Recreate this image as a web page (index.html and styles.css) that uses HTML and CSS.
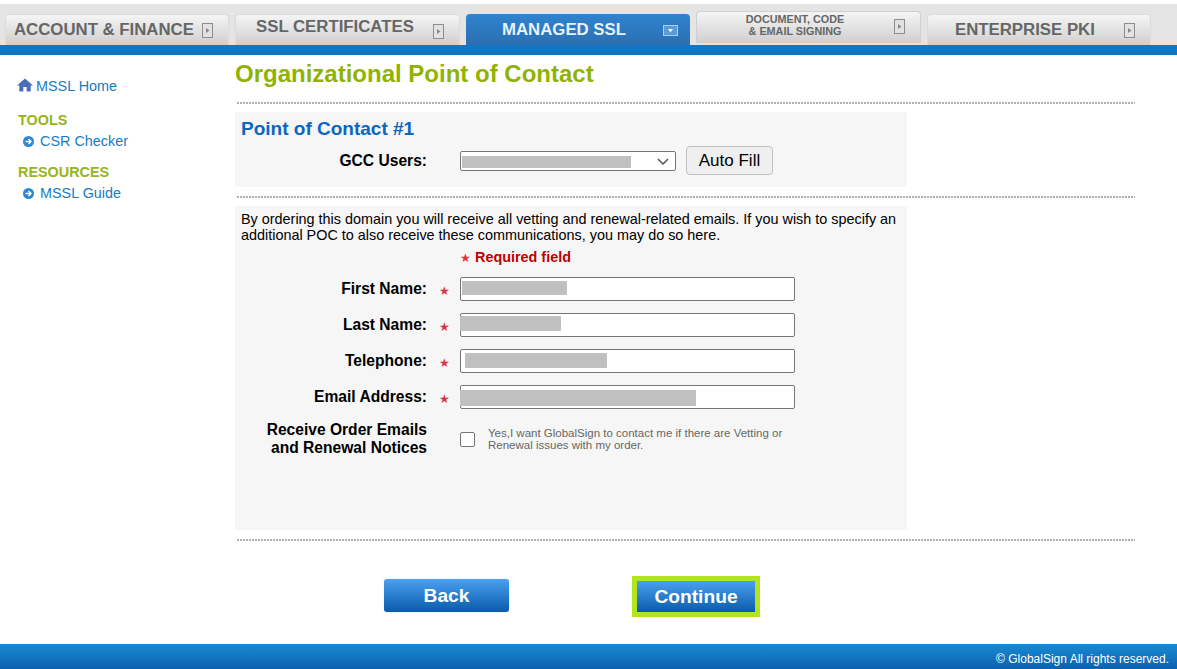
FILE: index.html
```html
<!DOCTYPE html>
<html lang="en">
<head>
<meta charset="utf-8">
<title>Organizational Point of Contact</title>
<link rel="stylesheet" href="styles.css">
</head>
<body>
<header class="top">
  <nav class="tabs">
    <a class="tab tab-account"><span class="tab-text">ACCOUNT &amp; FINANCE</span><svg class="tab-ico" viewBox="0 0 11 15"><rect x=".5" y=".5" width="10" height="14" fill="#e2e2e2" stroke="#8c8c8c"/><path d="M4 5l3.5 2.5L4 10z" fill="#8a8a8a"/></svg></a>
    <a class="tab tab-ssl"><span class="tab-text">SSL CERTIFICATES</span><svg class="tab-ico" viewBox="0 0 11 15"><rect x=".5" y=".5" width="10" height="14" fill="#e2e2e2" stroke="#8c8c8c"/><path d="M4 5l3.5 2.5L4 10z" fill="#8a8a8a"/></svg></a>
    <a class="tab tab-active"><span class="tab-text">MANAGED SSL</span><svg class="tab-ico-down" viewBox="0 0 15 11"><rect x=".5" y=".5" width="14" height="10" fill="#5b9bd8" stroke="#a9d0f0"/><path d="M5 4h5L7.500 7.500z" fill="#e8f4fc"/></svg></a>
    <a class="tab tab-doc"><span class="tab-text">DOCUMENT, CODE<br>&amp; EMAIL SIGNING</span><svg class="tab-ico" viewBox="0 0 11 15"><rect x=".5" y=".5" width="10" height="14" fill="#e2e2e2" stroke="#8c8c8c"/><path d="M4 5l3.5 2.5L4 10z" fill="#8a8a8a"/></svg></a>
    <a class="tab tab-pki"><span class="tab-text">ENTERPRISE PKI</span><svg class="tab-ico" viewBox="0 0 11 15"><rect x=".5" y=".5" width="10" height="14" fill="#e2e2e2" stroke="#8c8c8c"/><path d="M4 5l3.5 2.5L4 10z" fill="#8a8a8a"/></svg></a>
  </nav>
  <div class="blue-bar"></div>
</header>

<div class="page">
  <aside class="side">
    <a class="home"><svg class="home-ico" viewBox="0 0 16 14"><path d="M8 .5L0 7.500h2.300V13.500h4V9h3.400v4.500h4V7.500H16z" fill="#4a6fb8"/></svg>MSSL Home</a>
    <h3 class="side-head">TOOLS</h3>
    <a class="side-link"><svg class="arrow-ico" viewBox="0 0 11 11"><circle cx="5.500" cy="5.500" r="5.500" fill="#2f86d0"/><path d="M2.500 5.500h5M5.500 3l2.500 2.500L5.500 8" fill="none" stroke="#fff" stroke-width="1.400"/></svg>CSR Checker</a>
    <h3 class="side-head">RESOURCES</h3>
    <a class="side-link"><svg class="arrow-ico" viewBox="0 0 11 11"><circle cx="5.500" cy="5.500" r="5.500" fill="#2f86d0"/><path d="M2.500 5.500h5M5.500 3l2.500 2.500L5.500 8" fill="none" stroke="#fff" stroke-width="1.400"/></svg>MSSL Guide</a>
  </aside>

  <main class="main">
    <h1 class="title">Organizational Point of Contact</h1>
    <hr class="dots dots-first">
    <section class="panel panel-gcc">
      <h2 class="poc">Point of Contact #1</h2>
      <div class="gcc-row">
        <label class="lab gcc-lab">GCC Users:</label>
        <div class="field">
          <select class="sel"><option></option></select>
          <span class="mask mask-gcc"></span>
          <svg class="chev" viewBox="0 0 12 7"><path d="M1 1l5 5 5-5" fill="none" stroke="#555" stroke-width="1.500"/></svg>
        </div>
        <button class="autofill" type="button">Auto Fill</button>
      </div>
    </section>
    <hr class="dots">
    <section class="panel panel-form">
      <p class="intro">By ordering this domain you will receive all vetting and renewal-related emails. If you wish to specify an additional POC to also receive these communications, you may do so here.</p>
      <p class="req"><span class="star">★</span> Required field</p>
      <div class="row"><label class="lab">First Name:</label><span class="star star-cell">★</span><div class="field"><input class="inp" type="text"><span class="mask mask-first"></span></div></div>
      <div class="row"><label class="lab">Last Name:</label><span class="star star-cell">★</span><div class="field"><input class="inp" type="text"><span class="mask mask-last"></span></div></div>
      <div class="row"><label class="lab">Telephone:</label><span class="star star-cell">★</span><div class="field"><input class="inp" type="text"><span class="mask mask-tel"></span></div></div>
      <div class="row"><label class="lab">Email Address:</label><span class="star star-cell">★</span><div class="field"><input class="inp" type="text"><span class="mask mask-email"></span></div></div>
      <div class="row-check">
        <label class="lab lab-two">Receive Order Emails<br>and Renewal Notices</label>
        <span class="check"></span>
        <span class="check-text">Yes,I want GlobalSign to contact me if there are Vetting or Renewal issues with my order.</span>
      </div>
    </section>
    <hr class="dots">
    <div class="actions">
      <button class="btn btn-back" type="button">Back</button>
      <button class="btn btn-cont" type="button">Continue</button>
    </div>
  </main>
</div>

<footer class="foot">© GlobalSign All rights reserved.</footer>
</body>
</html>
```
FILE: styles.css
```css
* { box-sizing: border-box; }
html, body { margin: 0; padding: 0; }
body {
  width: 1177px;
  height: 669px;
  overflow: hidden;
  background: #fff;
  font-family: "Liberation Sans", Arial, sans-serif;
  color: #000;
  display: flex;
  flex-direction: column;
}

/* header */
.top { padding-top: 4px; height: 55px; flex: none; }
.tabs {
  display: flex;
  gap: 6px;
  height: 41px;
  padding-left: 5px;
  background: #e4e4e4;
  align-items: flex-end;
}
.tab {
  flex: none;
  width: 225px;
  height: 31px;
  display: flex;
  align-items: center;
  background: linear-gradient(#f5f5f5, #cfcfcf);
  border: 1px solid #dcdcdc;
  border-bottom: 0;
  border-radius: 4px 4px 0 0;
  font-weight: bold;
  font-size: 16.8px;
  color: #666;
  position: relative;
  white-space: nowrap;
}
.tab-text { display: block; }
.tab-ico { width: 11px; height: 15px; flex: none; margin-left: auto; }
.tab-ico-down { width: 15px; height: 11px; flex: none; margin-left: auto; }
.tab-account { width: 224px; padding: 0 15px 0 8px; }
.tab-ssl { padding: 0 15px 0 20px; }
.tab-ssl .tab-text { margin-top: -6px; }
.tab-ssl .tab-ico { margin-top: 2px; }
.tab-active {
  width: 224px;
  padding: 0 12px 0 36px;
  color: #e6f3fb;
  background: linear-gradient(#2f83cf, #2c6fb0);
  border: 0;
  height: 31px;
}
.tab-active .tab-ico-down { margin-top: 2px; }
.tab-doc {
  height: 32px;
  margin-bottom: 2px;
  padding: 0 15px 0 0;
  font-size: 10.8px;
  line-height: 12px;
  text-align: center;
  border-color: #cfcfcf;
}
.tab-doc .tab-text { width: 196px; margin-top: -6px; }
.tab-doc .tab-ico { margin-top: -3px; }
.tab-pki { width: 224px; padding: 0 15px 0 27px; }
.blue-bar { height: 10px; background: #1177c2; }

/* page */
.page { flex: 1; display: flex; min-height: 0; }
.side { width: 235px; flex: none; padding: 23px 0 0 17px; font-size: 14.4px; color: #1a7abf; }
.home, .side-link { display: flex; align-items: center; line-height: 17px; }
.home-ico { width: 16px; height: 14px; margin-right: 3px; margin-top: -3px; }
.side-head {
  margin: 17px 0 0 1px;
  font-size: 14.4px;
  line-height: 16px;
  color: #95b51a;
  font-weight: bold;
}
.side-head + .side-link { margin-top: 5px; padding-left: 6px; }
.side-link + .side-head { margin-top: 14px; }
.arrow-ico { width: 11px; height: 11px; margin-right: 6px; margin-top: -1px; }

.main { width: 902px; flex: none; }
.title {
  margin: 5px 0 0;
  font-size: 24px;
  line-height: 28px;
  font-weight: bold;
  color: #8fb300;
}
.dots {
  margin: 9px 0 8px 2px;
  width: 898px;
  height: 2px;
  border: 0;
  background: repeating-linear-gradient(90deg, #b0b0b0 0 2px, #fff 2px 3px);
}
.dots-first { margin-top: 14px; }
.panel { width: 672px; background: #f6f6f6; }
.panel-gcc { height: 75px; padding: 5px 0 0 6px; }
.poc { margin: 0; font-size: 19px; line-height: 23px; font-weight: bold; color: #0a66c2; }
.gcc-row { display: flex; align-items: center; margin-top: 6px; margin-left: -6px; }
.lab { width: 192px; flex: none; text-align: right; font-weight: bold; font-size: 15.6px; }
.gcc-lab { margin-right: 33px; }
.field { position: relative; flex: none; }
.sel {
  display: block;
  width: 216px;
  height: 20px;
  padding: 0;
  background: #fff;
  border: 1px solid #767676;
  border-radius: 2px;
  font-size: 13px;
  appearance: none;
}
.chev { position: absolute; right: 7px; top: 7px; width: 12px; height: 7px; }
.autofill {
  margin-left: 10px;
  width: 87px;
  height: 29px;
  padding: 0;
  font-family: inherit;
  font-size: 17px;
  color: #000;
  background: #efefef;
  border: 1px solid #c0c0c0;
  border-radius: 4px;
}
.mask { position: absolute; background: #c0c0c0; display: block; }
.mask-gcc { left: 2px; top: 5px; width: 169px; height: 12px; }
.mask-first { left: 2px; top: 4px; width: 105px; height: 14px; }
.mask-last { left: 0; top: 3px; width: 101px; height: 15px; }
.mask-tel { left: 5px; top: 4px; width: 142px; height: 15px; }
.mask-email { left: 0; top: 5px; width: 236px; height: 16px; }

.panel-form { height: 324px; padding: 5px 0 0 6px; }
.intro { margin: 0; width: 664px; font-size: 14.4px; line-height: 16px; }
.req {
  margin: 6px 0 0 219px;
  font-size: 14.4px;
  line-height: 16px;
  font-weight: bold;
  color: #c00000;
}
.star { color: #d9343f; font-size: 12px; font-weight: normal; vertical-align: 0; }
.row { display: flex; align-items: center; height: 24px; margin: 12px 0 0 -6px; }
.req + .row { margin-top: 11px; }
.star-cell { width: 33px; padding-left: 12px; text-align: left; margin-top: 3px; }
.inp {
  display: block;
  width: 335px;
  height: 24px;
  padding: 0;
  background: #fff;
  border: 1px solid #767676;
  border-radius: 2px;
}
.row-check { display: flex; align-items: flex-start; margin: 12px 0 0 -6px; }
.lab-two { line-height: 18px; margin-right: 33px; }
.check {
  width: 15px;
  height: 15px;
  margin-top: 11px;
  flex: none;
  background: #fff;
  border: 1px solid #767676;
  border-radius: 2px;
}
.check-text {
  width: 305px;
  margin: 6px 0 0 13px;
  font-size: 11.5px;
  line-height: 12px;
  color: #666;
}

.actions { display: flex; align-items: flex-end; height: 33px; margin-top: 38px; padding-left: 149px; }
.btn {
  height: 33px;
  padding: 0;
  border: 0;
  font-family: inherit;
  font-size: 19.2px;
  font-weight: bold;
  color: #fff;
  background: linear-gradient(#4ba0ef, #0a5cab);
}
.btn-back { width: 125px; border-radius: 3px; box-shadow: 0 0 1px #7cc5f5; }
.btn-cont { width: 118px; height: 31px; margin-left: 128px; outline: 5px solid #b2e61a; }

.foot {
  flex: none;
  height: 25px;
  background: linear-gradient(#1a8ad2, #0b62af);
  color: #fff;
  font-size: 12px;
  line-height: 30px;
  text-align: right;
  padding-right: 8px;
}
```
